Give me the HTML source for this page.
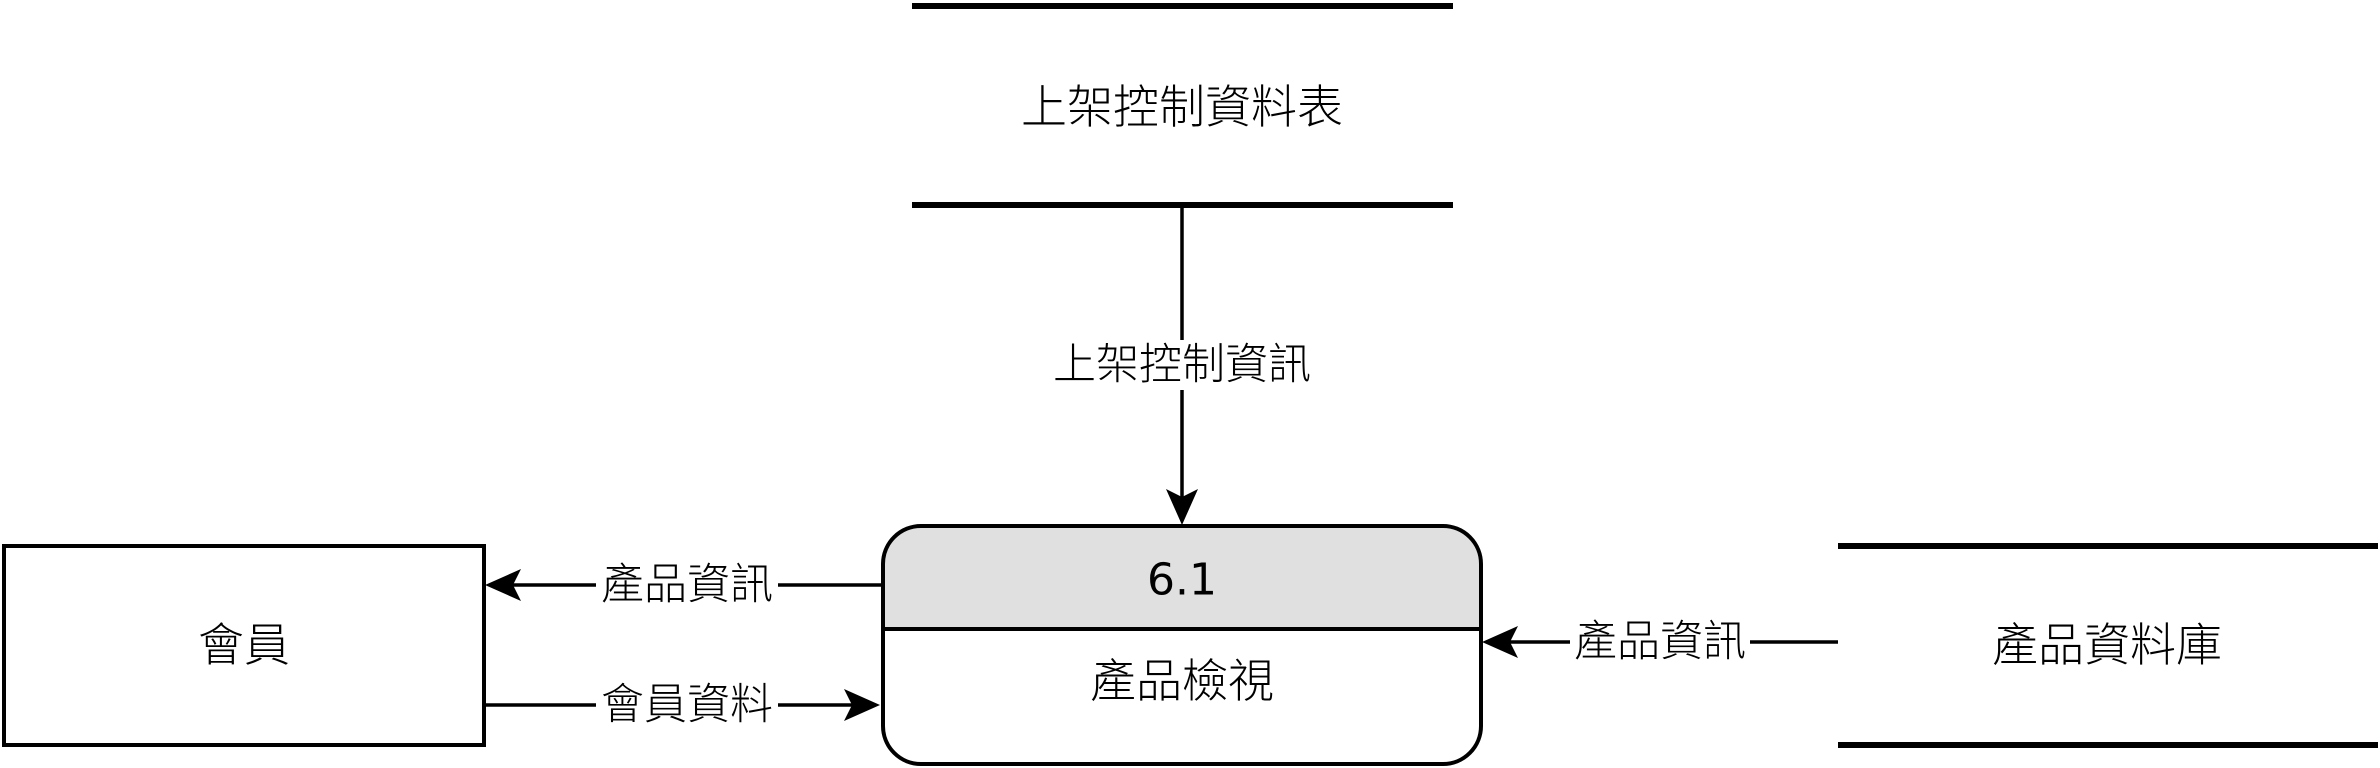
<!DOCTYPE html>
<html><head><meta charset="utf-8"><style>
html,body{margin:0;padding:0;background:#fff;width:2380px;height:768px;overflow:hidden}
svg text{font-family:"DejaVu Sans","Noto Sans CJK TC",sans-serif;font-weight:300;fill:#000}
svg text.n{font-weight:400}
</style></head><body>
<svg width="2380" height="768" viewBox="0 0 2380 768" xmlns="http://www.w3.org/2000/svg">
<line x1="912" y1="6" x2="1453" y2="6" stroke="#000" stroke-width="6"/>
<line x1="912" y1="205" x2="1453" y2="205" stroke="#000" stroke-width="6"/>
<text x="1182" y="107" font-size="46" text-anchor="middle" dominant-baseline="central">上架控制資料表</text>
<line x1="1182" y1="205" x2="1182" y2="500" stroke="#000" stroke-width="3.5"/>
<path d="M1182 525 L1166 489 L1182 497 L1198 489 Z" fill="#000"/>
<rect x="1040" y="340" width="284" height="50" fill="#fff"/>
<text x="1182" y="365" font-size="43" text-anchor="middle" dominant-baseline="central">上架控制資訊</text>
<path d="M921 526 H1443 A38 38 0 0 1 1481 564 V629 H883 V564 A38 38 0 0 1 921 526 Z" fill="#e0e0e0"/>
<rect x="883" y="526" width="598" height="238" rx="38" fill="none" stroke="#000" stroke-width="4"/>
<line x1="883" y1="629" x2="1481" y2="629" stroke="#000" stroke-width="4"/>
<text class="n" x="1182" y="580" font-size="44" text-anchor="middle" dominant-baseline="central">6.1</text>
<text x="1182" y="681" font-size="46" text-anchor="middle" dominant-baseline="central">產品檢視</text>
<rect x="4" y="546" width="480" height="199" fill="#fff" stroke="#000" stroke-width="4"/>
<text x="244" y="645" font-size="46" text-anchor="middle" dominant-baseline="central">會員</text>
<line x1="883" y1="585" x2="500" y2="585" stroke="#000" stroke-width="3.5"/>
<path d="M485 585 L521 569 L513 585 L521 601 Z" fill="#000"/>
<rect x="596" y="560" width="182" height="50" fill="#fff"/>
<text x="687" y="585" font-size="43" text-anchor="middle" dominant-baseline="central">產品資訊</text>
<line x1="484" y1="705" x2="862" y2="705" stroke="#000" stroke-width="3.5"/>
<path d="M880 705 L844 689 L852 705 L844 721 Z" fill="#000"/>
<rect x="596" y="680" width="182" height="50" fill="#fff"/>
<text x="687" y="705" font-size="43" text-anchor="middle" dominant-baseline="central">會員資料</text>
<line x1="1838" y1="546" x2="2378" y2="546" stroke="#000" stroke-width="6"/>
<line x1="1838" y1="745" x2="2378" y2="745" stroke="#000" stroke-width="6"/>
<text x="2107" y="645" font-size="46" text-anchor="middle" dominant-baseline="central">產品資料庫</text>
<line x1="1838" y1="642" x2="1498" y2="642" stroke="#000" stroke-width="3.5"/>
<path d="M1482 642 L1518 626 L1510 642 L1518 658 Z" fill="#000"/>
<rect x="1570" y="617" width="180" height="50" fill="#fff"/>
<text x="1660" y="642" font-size="43" text-anchor="middle" dominant-baseline="central">產品資訊</text>
</svg>
</body></html>
